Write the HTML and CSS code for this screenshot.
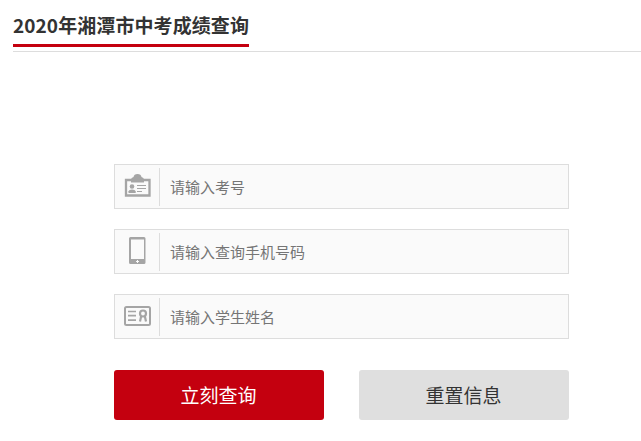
FILE: index.html
```
<!DOCTYPE html>
<html lang="zh-CN">
<head>
    <meta charset="UTF-8">
    <title>2020年湘潭市中考成绩查询</title>
    <link rel="stylesheet" href="styles.css">
</head>
<body>
    <div class="title">
        <h1>2020年湘潭市中考成绩查询</h1>
    </div>
    <form class="search">
        <!-- 考号 -->
        <div class="item">
            <label class="icon" for="kh">
                <svg width="44" height="43" viewBox="0 0 44 43">
                    <path d="M11 15H34.5V30.5H11Z" fill="none" stroke="#a5a5a5" stroke-width="2.3"/>
                    <path d="M16 17.5V15Q16 12.5 18.5 12Q19 9 22.5 9T26.5 12Q29 12.5 29 15V17.5Z" fill="#a5a5a5"/>
                    <circle cx="17" cy="21.5" r="2.3" fill="#a5a5a5"/>
                    <path d="M13.5 28V26.3Q14 24.8 17 24.5Q20.2 24.8 20.7 26.3V28Z" fill="#a5a5a5"/>
                    <path d="M22 20.5H31M22 23.5H31M22 26.5H27" stroke="#a5a5a5"/>
                </svg>
            </label>
            <input type="text" id="kh" name="kh" placeholder="请输入考号">
        </div>
        <!-- 手机 -->
        <div class="item">
            <label class="icon" for="phone">
                <svg width="44" height="43" viewBox="0 0 44 43">
                    <path fill-rule="evenodd" d="M15.5 7H29Q30.5 7 30.5 8.5V32.5Q30.5 34 29 34H15.5Q14 34 14 32.5V8.5Q14 7 15.5 7ZM16 9.5V29H29V9.5Z" fill="#a5a5a5"/>
                    <path d="M22.5 30V33M21 31.5H24" stroke="#fafafa"/>
                </svg>
            </label>
            <input type="text" id="phone" name="phone" placeholder="请输入查询手机号码">
        </div>
        <!-- 姓名 -->
        <div class="item">
            <label class="icon" for="xm">
                <svg width="44" height="43" viewBox="0 0 44 43" fill="none" stroke="#a5a5a5">
                    <rect x="10" y="12" width="25" height="18" rx="1.5" stroke-width="2"/>
                    <path d="M13 16.5H21M13 20.7H21M13 25.2H21" stroke-width="1.7"/>
                    <circle cx="28" cy="18.5" r="3" stroke-width="2.2"/>
                    <path d="M26.2 21L25 26.5M29.8 21L31 26.5" stroke-width="2.2"/>
                </svg>
            </label>
            <input type="text" id="xm" name="xm" placeholder="请输入学生姓名">
        </div>
        <div class="btns">
            <button type="button" class="btn btn-query">立刻查询</button>
            <button type="reset" class="btn btn-reset">重置信息</button>
        </div>
    </form>
</body>
</html>
```
FILE: styles.css
```
*{
    box-sizing: border-box;
}
body{
    margin: 0;
    background-color: #fff;
    color: #333;
    font-family: "Noto Sans CJK SC", sans-serif;
    overflow: hidden;
}
.title{
    height: 52px;
    margin-left: 13px;
    border-bottom: 1px solid #ddd;
}
.title h1{
    display: inline-block;
    height: 47px;
    margin: 0;
    border-bottom: 3px solid #c4000f;
    font-size: 19px;
    line-height: 50px;
    letter-spacing: 0.08px;
    white-space: nowrap;
}
.search{
    width: 455px;
    margin: 112px 0 0 114px;
}
.item{
    display: flex;
    align-items: center;
    height: 45px;
    margin-bottom: 20px;
    border: 1px solid #ddd;
    background-color: #fafafa;
}
.icon{
    width: 45px;
    height: 38px;
    border-right: 1px solid #ddd;
    display: flex;
    align-items: center;
}
.icon svg{
    flex: none;
}
.item input{
    flex: 1;
    height: 43px;
    padding: 0 10px;
    border: none;
    outline: none;
    background: none;
    font-family: inherit;
    font-size: 15px;
}
.item input::placeholder{
    color: #757575;
}
.btns{
    display: flex;
    justify-content: space-between;
    margin-top: 31px;
}
.btn{
    width: 210px;
    height: 50px;
    padding: 0 1px 2px 0;
    border: none;
    border-radius: 3px;
    font-family: inherit;
    font-size: 19px;
    cursor: pointer;
}
.btn-query{
    background-color: #c4000f;
    color: #fff;
}
.btn-reset{
    background-color: #dfdfdf;
    color: #333;
}
```
